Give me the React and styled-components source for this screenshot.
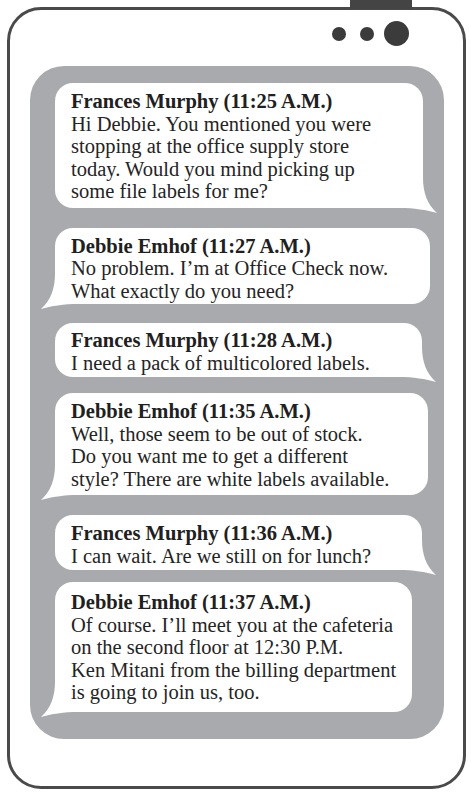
import React from "react";
import styled, { createGlobalStyle } from "styled-components";

const Global = createGlobalStyle`
  html, body { margin: 0; padding: 0; background: #ffffff; }
  body { font-family: "Liberation Serif", "Times New Roman", serif; }
`;

const Page = styled.div`
  position: relative;
  width: 471px;
  height: 798px;
  box-sizing: border-box;
  padding: 7px 5px 9px 7px;
`;

const Tab = styled.div`
  position: absolute;
  left: 350px;
  top: 0;
  width: 62px;
  height: 9px;
  background: #444444;
`;

const Phone = styled.div`
  width: 459px;
  height: 782px;
  box-sizing: border-box;
  border: 3px solid #4a4a4a;
  border-radius: 34px;
  background: #ffffff;
  display: flex;
  flex-direction: column;
`;

const DotsRow = styled.div`
  display: flex;
  justify-content: flex-end;
  align-items: center;
  height: 25px;
  margin-top: 11px;
  padding-right: 54px;
`;

const Dot = styled.span`
  display: block;
  width: ${(p) => p.$size}px;
  height: ${(p) => p.$size}px;
  margin-left: ${(p) => p.$ml || 0}px;
  border-radius: 50%;
  background: #3b3b3b;
`;

const Panel = styled.div`
  margin: 20px 19px 0 20px;
  background: #a9aaad;
  border-radius: 34px;
  padding: 17px 14px 27px 25px;
  display: flex;
  flex-direction: column;
`;

const Bubble = styled.div`
  position: relative;
  width: ${(p) => p.$w}px;
  box-sizing: border-box;
  margin-top: ${(p) => p.$mt}px;
  background: #ffffff;
  border-radius: 18px;
  padding: ${(p) => p.$pt}px 8px ${(p) => p.$pb}px 16px;
  font-size: 20.5px;
  line-height: 22.5px;
  color: #242424;
`;

const Name = styled.div`
  position: relative;
  font-weight: bold;
  color: #202020;
`;

const Line = styled.div`
  position: relative;
  white-space: nowrap;
`;

const TailSvg = styled.svg`
  position: absolute;
  bottom: -6px;
  width: 38px;
  height: 36px;
  ${(p) =>
    p.$side === "left"
      ? "left: -15px; transform: scaleX(-1);"
      : "right: -15px;"}
`;

const Tail = ({ side }) => (
  <TailSvg $side={side} viewBox="0 0 38 36">
    <path
      d="M0 0 L23 0 C23 14 27 26 37 35 C27 32 14 30 0 30 Z"
      fill="#ffffff"
    />
  </TailSvg>
);

const messages = [
  {
    name: "Frances Murphy (11:25 A.M.)",
    side: "right",
    w: 368,
    mt: 0,
    pt: 7,
    pb: 5,
    lines: [
      "Hi Debbie. You mentioned you were",
      "stopping at the office supply store",
      "today. Would you mind picking up",
      "some file labels for me?",
    ],
  },
  {
    name: "Debbie Emhof (11:27 A.M.)",
    side: "left",
    w: 375,
    mt: 20,
    pt: 7,
    pb: 2,
    lines: ["No problem. I\u2019m at Office Check now.", "What exactly do you need?"],
  },
  {
    name: "Frances Murphy (11:28 A.M.)",
    side: "right",
    w: 367,
    mt: 19,
    pt: 6,
    pb: 3,
    lines: ["I need a pack of multicolored labels."],
  },
  {
    name: "Debbie Emhof (11:35 A.M.)",
    side: "left",
    w: 373,
    mt: 16,
    pt: 7,
    pb: 5,
    lines: [
      "Well, those seem to be out of stock.",
      "Do you want me to get a different",
      "style? There are white labels available.",
    ],
  },
  {
    name: "Frances Murphy (11:36 A.M.)",
    side: "right",
    w: 367,
    mt: 20,
    pt: 7,
    pb: 3,
    lines: ["I can wait. Are we still on for lunch?"],
  },
  {
    name: "Debbie Emhof (11:37 A.M.)",
    side: "left",
    w: 357,
    mt: 12,
    pt: 9,
    pb: 8,
    lines: [
      "Of course. I\u2019ll meet you at the cafeteria",
      "on the second floor at 12:30 P.M.",
      "Ken Mitani from the billing department",
      "is going to join us, too.",
    ],
  },
];

export default function App() {
  return (
    <>
      <Global />
      <Page>
        <Phone>
          <DotsRow>
            <Dot $size={14} />
            <Dot $size={14} $ml={14} />
            <Dot $size={25} $ml={10} />
          </DotsRow>
          <Panel>
            {messages.map((m, i) => (
              <Bubble key={i} $w={m.w} $mt={m.mt} $pt={m.pt} $pb={m.pb}>
                <Tail side={m.side} />
                <Name>{m.name}</Name>
                {m.lines.map((l, j) => (
                  <Line key={j}>{l}</Line>
                ))}
              </Bubble>
            ))}
          </Panel>
        </Phone>
        <Tab />
      </Page>
    </>
  );
}
